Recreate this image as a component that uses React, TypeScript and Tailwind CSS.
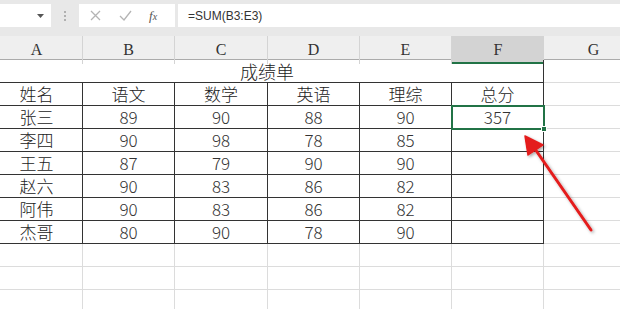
import React from "react";

const names = ["张三", "李四", "王五", "赵六", "阿伟", "杰哥"];
const scores = [
  ["89", "90", "88", "90", "357"],
  ["90", "98", "78", "85", ""],
  ["87", "79", "90", "90", ""],
  ["90", "83", "86", "82", ""],
  ["90", "83", "86", "82", ""],
  ["80", "90", "78", "90", ""],
];
const heads = ["姓名", "语文", "数学", "英语", "理综", "总分"];
const letters = ["A", "B", "C", "D", "E", "F", "G"];

function Cell({ dark, children, isNum }: { dark: boolean; children?: React.ReactNode; isNum?: boolean }) {
  return (
    <div
      className={`h-[23px] border-r border-b flex items-center justify-center ${
        dark ? "border-[#333]" : "border-[#dcdcdc]"
      } ${
        isNum
          ? "text-[17px] text-[#333] font-light font-[Noto_Sans_CJK_SC,sans-serif]"
          : "text-[17px] text-[#222] font-light font-[Noto_Sans_CJK_SC,sans-serif]"
      }`}
    >
      {children}
    </div>
  );
}

export default function App() {
  const rows: string[][] = [heads, ...names.map((n, i) => [n, ...scores[i]])];
  return (
    <div className="relative w-[620px] h-[309px] overflow-hidden bg-white">
      {/* toolbar */}
      <div className="h-[36px] bg-[#e8e8e8] flex items-start pt-[4px]">
        <div className="w-[51px] h-[23px] bg-white flex items-center justify-end pr-[7px]">
          <svg width="7" height="4" viewBox="0 0 7 4">
            <path d="M0 0 L7 0 L3.5 4 Z" fill="#555" />
          </svg>
        </div>
        <div className="w-[28px] h-[23px] flex flex-col items-center justify-center gap-[2px]">
          <div className="w-[2px] h-[2px] bg-[#b0b0b0]" />
          <div className="w-[2px] h-[2px] bg-[#b0b0b0]" />
          <div className="w-[2px] h-[2px] bg-[#b0b0b0]" />
        </div>
        <div className="w-[96px] h-[23px] bg-white flex items-center">
          <svg width="11" height="11" viewBox="0 0 11 11" className="ml-[11px]">
            <path d="M1 1 L10 10 M10 1 L1 10" stroke="#b4b4b4" strokeWidth="1.3" />
          </svg>
          <svg width="13" height="11" viewBox="0 0 13 11" className="ml-[18px]">
            <path d="M1 6 L5 10 L12 1" stroke="#b4b4b4" strokeWidth="1.3" fill="none" />
          </svg>
          <span className="ml-[17px] text-[13px] italic text-[#555] font-[Liberation_Serif,serif] leading-none">
            f<span className="text-[10px]">x</span>
          </span>
        </div>
        <div className="ml-[3px] flex-1 h-[23px] bg-white flex items-center pl-[10px] text-[12px] text-[#333] font-[Liberation_Sans,Arial,sans-serif]">
          =SUM(B3:E3)
        </div>
      </div>

      {/* column headers */}
      <div className="-ml-[9px] grid grid-cols-[92px_92px_93px_92px_92px_92px_100px] h-[24px] bg-[#efefef] border-b border-[#ababab]">
        {letters.map((l) => (
          <div
            key={l}
            className={`flex items-center justify-center text-[16px] text-[#333] font-[Liberation_Serif,serif] ${
              l === "F" ? "bg-[#d3d3d3] border-b-2 border-b-[#217346] pt-[2px]" : "border-r border-[#d4d4d4]"
            }`}
          >
            {l}
          </div>
        ))}
      </div>

      {/* body */}
      <div className="-ml-[9px] grid grid-cols-[92px_92px_93px_92px_92px_92px_100px]">
        <div className="col-span-6 h-[23px] border-r border-b border-[#333] flex items-end justify-center text-[18px] leading-[22px] text-[#222] font-light font-[Noto_Sans_CJK_SC,sans-serif]">
          成绩单
        </div>
        <div className="h-[23px] border-r border-b border-[#dcdcdc]" />
        {rows.map((r, ri) => (
          <React.Fragment key={ri}>
            {r.map((v, ci) => (
              <Cell key={ci} dark isNum={ri > 0 && ci > 0}>
                {v}
              </Cell>
            ))}
            <Cell dark={false} />
          </React.Fragment>
        ))}
        {[0, 1, 2].map((k) => (
          <React.Fragment key={"e" + k}>
            {letters.map((l) => (
              <Cell key={l} dark={false} />
            ))}
          </React.Fragment>
        ))}
      </div>

      {/* selection */}
      <div className="absolute left-[451px] top-[105px] w-[94px] h-[25px] border-2 border-[#217346]" />
      <div className="absolute left-[541px] top-[126px] w-[6px] h-[6px] bg-[#217346] border border-white" />

      {/* red arrow */}
      <svg className="absolute left-0 top-0" width="620" height="309" viewBox="0 0 620 309">
        <defs>
          <filter id="sh" x="-20%" y="-20%" width="140%" height="140%">
            <feDropShadow dx="1.5" dy="1.5" stdDeviation="1.5" floodColor="#000" floodOpacity="0.35" />
          </filter>
        </defs>
        <g filter="url(#sh)">
          <line x1="591" y1="230" x2="535" y2="149" stroke="#e41b1b" strokeWidth="3" strokeLinecap="round" />
          <path d="M525 136 L543 145 L528 155 Z" fill="#e41b1b" stroke="#e41b1b" strokeWidth="1.5" strokeLinejoin="round" />
        </g>
      </svg>
    </div>
  );
}
